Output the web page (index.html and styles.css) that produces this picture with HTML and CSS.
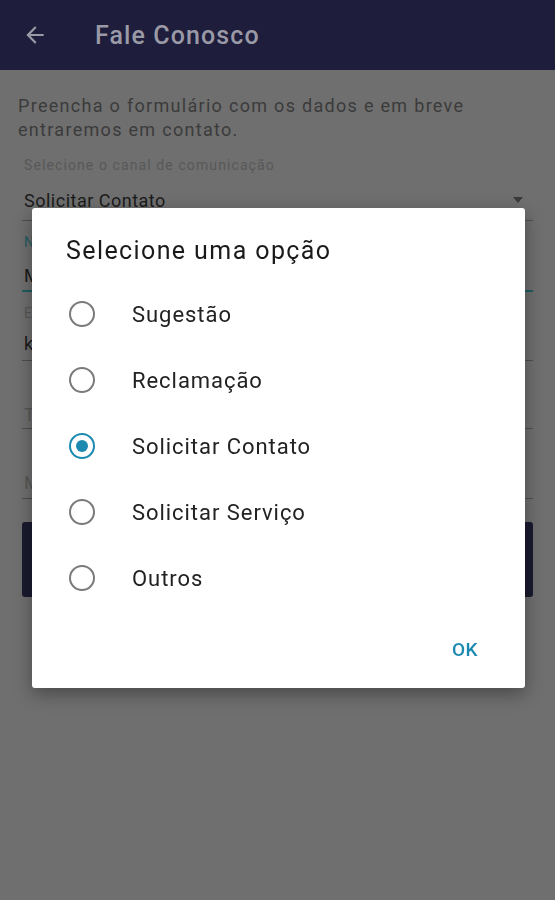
FILE: index.html
```html
<!DOCTYPE html>
<html lang="pt-BR">
<head>
<meta charset="utf-8">
<title>Fale Conosco</title>
<link rel="stylesheet" href="styles.css">
</head>
<body>
<div class="app">
  <header class="toolbar">
    <svg class="back" width="24" height="24" viewBox="0 0 24 24"><path d="M20 11H7.83l5.59-5.59L12 4l-8 8 8 8 1.41-1.41L7.83 13H20v-2z" fill="currentColor"/></svg>
    <h1 class="title">Fale Conosco</h1>
  </header>
  <main class="form">
    <p class="intro">Preencha o formulário com os dados e em breve entraremos em contato.</p>
    <div class="field select">
      <span class="label">Selecione o canal de comunicação</span>
      <span class="value">Solicitar Contato</span>
      <span class="caret"></span>
    </div>
    <div class="field focused">
      <span class="label">Nome</span>
      <span class="value">Maria Silva</span>
    </div>
    <div class="field mail">
      <span class="label">E-mail</span>
      <span class="value">k.silva@email.com</span>
    </div>
    <div class="field empty phone">
      <span class="placeholder">Telefone</span>
    </div>
    <div class="field empty message">
      <span class="placeholder">Mensagem</span>
    </div>
    <button class="send">ENVIAR</button>
  </main>
</div>

<div class="scrim">
  <div class="dialog" role="dialog">
    <h2 class="dialog-title">Selecione uma opção</h2>
    <ul class="options">
      <li class="option"><span class="radio"></span><span class="opt-label">Sugestão</span></li>
      <li class="option"><span class="radio"></span><span class="opt-label">Reclamação</span></li>
      <li class="option"><span class="radio checked"></span><span class="opt-label">Solicitar Contato</span></li>
      <li class="option"><span class="radio"></span><span class="opt-label">Solicitar Serviço</span></li>
      <li class="option"><span class="radio"></span><span class="opt-label">Outros</span></li>
    </ul>
    <div class="actions"><span class="ok">OK</span></div>
  </div>
</div>
</body>
</html>
```
FILE: styles.css
```css
* { box-sizing: border-box; }
html, body { margin: 0; padding: 0; }
body {
  width: 555px;
  height: 900px;
  overflow: hidden;
  background: #6f6f6f;
  font-family: Roboto, "Noto Sans", sans-serif;
}
.app { width: 555px; height: 900px; }
.toolbar {
  height: 70px;
  background: #1e1d3c;
  display: flex;
  align-items: center;
  padding-left: 22px;
  color: #9a9aa6;
}
.back { width: 26px; height: 26px; flex: none; }
.title {
  margin: 0 0 0 47px;
  font-size: 25px;
  font-weight: 500;
  color: #9a9aa6;
  letter-spacing: 1.1px;
}
.form { padding: 24px 22px 0 18px; }
.intro {
  margin: 0;
  font-size: 18px;
  line-height: 24px;
  letter-spacing: 1.3px;
  color: #3b3b3b;
  width: 500px;
}
.field {
  position: relative;
  margin-left: 6px;
  margin-right: 0;
  border-bottom: 1px solid #4e4e4e;
  display: flex;
  flex-direction: column;
}
.field .label { font-size: 14px; line-height: 16px; letter-spacing: 1.1px; color: #585858; }
.field .value { font-size: 18px; line-height: 22px; letter-spacing: 0.5px; color: #1b1b1b; }
.select { margin-top: 9px; height: 70px; padding-top: 6px; margin-left: 4px; padding-left: 2px; }
.select .value { margin-top: 17px; }
.caret {
  position: absolute;
  right: 10px;
  top: 46px;
  width: 0; height: 0;
  border-left: 5px solid transparent;
  border-right: 5px solid transparent;
  border-top: 6px solid #3a3a3a;
}
.focused { height: 71px; padding-top: 13px; border-bottom: 2px solid #1e5d60; margin-left: 4px; padding-left: 2px; }
.focused .label { color: #1e5d60; }
.focused .value { margin-top: 15px; }
.mail { height: 69px; padding-top: 13px; margin-left: 4px; padding-left: 2px; }
.mail .value { margin-top: 12px; }
.empty { margin-left: 4px; padding-left: 2px; padding-top: 44px; }
.phone { height: 68px; }
.message { height: 70px; }
.placeholder { font-size: 18px; line-height: 20px; letter-spacing: 0.8px; color: #585858; }
.send {
  display: block;
  margin: 23px 0 0 4px;
  width: 511px;
  height: 75px;
  border: 0;
  border-radius: 3px;
  background: #1a1a2f;
  color: #6f6f80;
  font-family: inherit;
  font-size: 16px;
  font-weight: 500;
}

.scrim {
  position: fixed;
  inset: 0;
  padding: 208px 30px 0 32px;
}
.dialog {
  width: 493px;
  height: 480px;
  background: #fff;
  border-radius: 3px;
  box-shadow: 0 6px 18px rgba(0,0,0,0.35);
  padding-top: 29px;
}
.dialog-title {
  margin: 0 0 0 34px;
  font-size: 25px;
  line-height: 28px;
  font-weight: 400;
  letter-spacing: 1.4px;
  color: #1a1a1a;
}
.options { list-style: none; margin: 16px 0 0; padding: 0; }
.option {
  height: 66px;
  display: flex;
  align-items: center;
  padding-left: 37px;
}
.radio {
  width: 26px;
  height: 26px;
  border-radius: 50%;
  border: 2.5px solid #7a7a7a;
  flex: none;
  display: flex;
  align-items: center;
  justify-content: center;
}
.radio.checked { border-color: #1c8ab0; }
.radio.checked::after {
  content: "";
  width: 12px;
  height: 12px;
  border-radius: 50%;
  background: #1c8ab0;
}
.opt-label {
  margin-left: 37px;
  font-size: 22px;
  color: #222;
  letter-spacing: 0.95px;
}
.actions {
  height: 76px;
  display: flex;
  align-items: center;
  justify-content: flex-end;
  padding-right: 47px;
}
.ok {
  font-size: 19px;
  font-weight: 500;
  letter-spacing: 0.5px;
  color: #1c8ab0;
}
```
